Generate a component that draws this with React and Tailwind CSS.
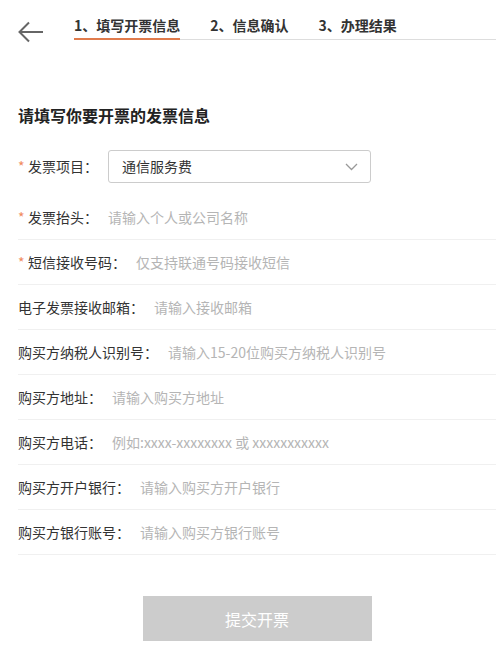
import React from 'react';

const fields = [
  { label: '发票抬头：', placeholder: '请输入个人或公司名称', required: true },
  { label: '短信接收号码：', placeholder: '仅支持联通号码接收短信', required: true },
  { label: '电子发票接收邮箱：', placeholder: '请输入接收邮箱' },
  { label: '购买方纳税人识别号：', placeholder: '请输入15-20位购买方纳税人识别号' },
  { label: '购买方地址：', placeholder: '请输入购买方地址' },
  { label: '购买方电话：', placeholder: '例如:xxxx-xxxxxxxx 或 xxxxxxxxxxx' },
  { label: '购买方开户银行：', placeholder: '请输入购买方开户银行' },
  { label: '购买方银行账号：', placeholder: '请输入购买方银行账号' },
];

const Label = ({ text, required }) => (
  <span className="flex items-center shrink-0 whitespace-nowrap text-[14px] text-[#333]">
    {required && <span className="w-[10px] text-[#f08a5d]">*</span>}
    {text}
  </span>
);

const App = () => {
  return (
    <div
      className="min-h-screen bg-white"
      style={{ fontFamily: '"Noto Sans CJK SC", "Noto Sans", sans-serif' }}
    >
      {/* Header with steps */}
      <div className="flex items-end pl-[18px] pr-[2px] pt-[15px]">
        <button className="-mb-[3px] mr-[30px] text-[#666]">
          <svg width="26" height="22" viewBox="0 0 26 22" fill="none" stroke="currentColor" strokeWidth="2">
            <path d="M25 11H2M11 1.5L1.5 11l9.5 9.5" />
          </svg>
        </button>
        <div className="flex flex-1 gap-[30px] border-b border-[#ddd] text-[14px] font-bold text-[#333]">
          <div className="-mb-px border-b-2 border-[#e07b4c] pb-[3px] leading-[20px]">1、填写开票信息</div>
          <div className="pb-[3px] leading-[20px]">2、信息确认</div>
          <div className="pb-[3px] leading-[20px]">3、办理结果</div>
        </div>
      </div>

      <div className="px-[18px] pr-[2px]">
        <h2 className="mt-[63px] text-[16px] font-bold leading-[24px] text-[#222]">请填写你要开票的发票信息</h2>

        <div className="mt-[23px] flex items-center">
          <Label text="发票项目：" required />
          <div className="ml-[10px] flex h-[33px] w-[263px] items-center justify-between rounded-[3px] border border-[#ccc] pl-[13px] pr-[12px] text-[14px] text-[#333]">
            <span>通信服务费</span>
            <svg width="13" height="8" viewBox="0 0 13 8" fill="none" stroke="#999" strokeWidth="1.3">
              <path d="M1 1l5.5 5.5L12 1" />
            </svg>
          </div>
        </div>

        <div className="mt-[12px]">
          {fields.map((f) => (
            <div key={f.label} className="flex h-[45px] items-center border-b border-[#f0f0f0]">
              <Label text={f.label} required={f.required} />
              <span className="ml-[10px] whitespace-nowrap text-[14px] text-[#b5b5b5]">{f.placeholder}</span>
            </div>
          ))}
        </div>

        <div className="mt-[41px] flex justify-center">
          <button className="h-[45px] w-[229px] bg-[#cccccc] text-[16px] text-white">提交开票</button>
        </div>
      </div>
    </div>
  );
};

export default App;
